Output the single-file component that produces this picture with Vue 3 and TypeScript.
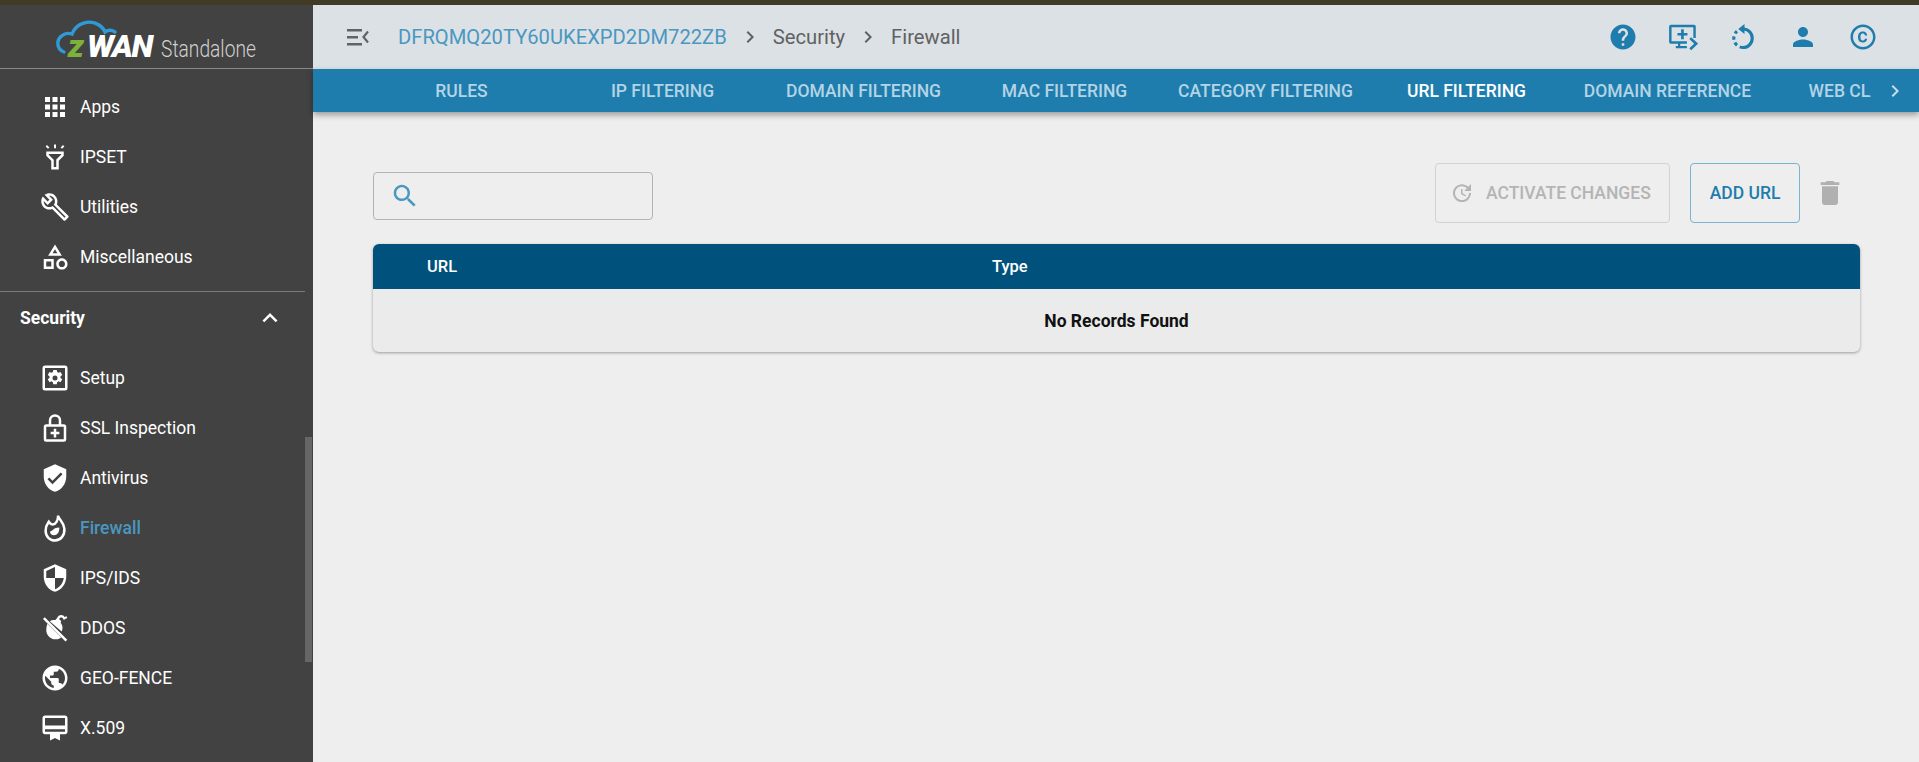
<script setup lang="ts">
interface NavItem { label: string; d: string; line?: string; active?: boolean }

const topItems: NavItem[] = [
  { label: 'Apps', d: 'M4 8h4V4H4v4zm6 12h4v-4h-4v4zm-6 0h4v-4H4v4zm0-6h4v-4H4v4zm6 0h4v-4h-4v4zm6-10v4h4V4h-4zm-6 4h4V4h-4v4zm6 6h4v-4h-4v4zm0 6h4v-4h-4v4z' },
  { label: 'IPSET', d: 'M11.200 2h1.600v3h-1.600zM4.500 3.500l1.100-1.100 1.900 1.900-1.100 1.100zM18.400 2.400l1.100 1.100-1.900 1.900-1.100-1.100zM5 7.500h14v3.400l-4 4V22H9v-7.100l-4-4zm2 2v.6l4 4V20h2v-6l4-4v-.5z' },
  { label: 'Utilities', d: 'M22.610 18.990l-9.080-9.080c.93-2.340.45-5.100-1.440-7C9.790.61 6.210.4 3.660 2.260L7.500 6.110 6.080 7.520 2.250 3.690C.39 6.230.6 9.820 2.900 12.110c1.860 1.860 4.570 2.350 6.890 1.480l9.110 9.110c.39.39 1.020.39 1.410 0l2.300-2.300c.4-.38.4-1.010 0-1.410zm-3 1.600l-9.460-9.460c-.61.45-1.290.72-2 .82-1.360.2-2.790-.21-3.830-1.250C3.370 9.760 2.930 8.500 3 7.260l3.090 3.090 4.240-4.240-3.090-3.090c1.240-.07 2.490.37 3.440 1.310 1.080 1.080 1.490 2.570 1.240 3.960-.12.71-.42 1.370-.88 1.960l9.450 9.450-.88.88z' },
  { label: 'Miscellaneous', d: 'M12 2l-5.500 9h11L12 2zm0 3.840L13.930 9h-3.870L12 5.840zM17.500 13c-2.490 0-4.500 2.010-4.500 4.500s2.010 4.500 4.500 4.500 4.500-2.010 4.500-4.500-2.010-4.500-4.500-4.500zm0 7c-1.380 0-2.500-1.120-2.500-2.500s1.120-2.500 2.500-2.500 2.500 1.120 2.500 2.500-1.120 2.500-2.500 2.500zM3 21.500h8v-8H3v8zm2-6h4v4H5v-4z' },
]

const secItems: NavItem[] = [
  { label: 'Setup', d: 'M4 2h16a2 2 0 0 1 2 2v16a2 2 0 0 1-2 2H4a2 2 0 0 1-2-2V4a2 2 0 0 1 2-2zm0 2v16h16V4zM13.400 5.500l.3 1.700 1.100.6 1.600-.7 1.400 2.400-1.400 1.100c.1.400.1.800 0 1.300l1.400 1-1.400 2.400-1.600-.7-1.100.7-.3 1.700h-2.800l-.3-1.700-1.100-.7-1.600.7-1.400-2.400 1.400-1a3 3 0 0 1 0-1.300l-1.400-1.100 1.400-2.400 1.600.7 1.100-.6.3-1.700zM12 10a2 2 0 1 0 0 4 2 2 0 0 0 0-4z' },
  { label: 'SSL Inspection', d: 'M12 1a5 5 0 0 1 5 5v3h2a2 2 0 0 1 2 2v10a2 2 0 0 1-2 2H5a2 2 0 0 1-2-2V11a2 2 0 0 1 2-2h2V6a5 5 0 0 1 5-5zm0 2a3 3 0 0 0-3 3v3h6V6a3 3 0 0 0-3-3zM5 11v10h14V11zm6 1.500h2V15h2.500v2H13v2.500h-2V17H8.500v-2H11z' },
  { label: 'Antivirus', d: 'M12 1L3 5v6c0 5.550 3.840 10.740 9 12 5.160-1.260 9-6.450 9-12V5l-9-4zm-2 16l-4-4 1.410-1.410L10 14.170l6.590-6.590L18 9l-8 8z' },
  {
    label: 'Firewall',
    active: true,
    d: 'M15.500 11.500c0 4-1.700 6.200-4.300 6.200-2 0-3.200-1.400-3.200-3 2.300-.1 2.300-3.200 7.500-3.200z',
    line: 'M14.500 2c.3 3.200 4.500 5.200 5 10.500.5 5.500-3.200 9.500-7.500 9.500-4.200 0-7.500-3.200-7.500-7.800 0-3 1.400-5.700 2.500-7.200 1 1.500 2 2.200 3.200 2.200 2.300 0 4.300-3.200 4.300-7.200z',
  },
  { label: 'IPS/IDS', d: 'M12 1L3 5v6c0 5.550 3.840 10.740 9 12 5.160-1.260 9-6.450 9-12V5l-9-4zm0 10.990h7c-.53 4.120-3.280 7.790-7 8.940V12H5V6.300l7-3.110v8.800z' },
  { label: 'DDOS', d: 'M2.400 4.800l1.400-1.400 18 18-1.400 1.400zM7.800 6.500c1-.6 2-.9 3.200-.9l1.300-.1 1.400-1.600c.6-1.400 1.800-2.300 3.300-2.300 1.200 0 2.100.6 2.600 1.500l1.700-.5.500 1.400-2 .9c-.4.9-1 .7-1.200-.1-.2-.8-.7-1.300-1.600-1.300-.7 0-1.400.5-1.700 1.400l1.700 1.400-.5 1.400c1 1.200 1.500 2.600 1.500 4.100 0 1.100-.3 2.100-.7 3zM5.900 8.500l11 11c-1.300 1-2.700 1.500-4.400 1.500-4 0-7.500-3.300-7.500-7.300 0-1.900.3-3.700.9-5.200z' },
  { label: 'GEO-FENCE', d: 'M12 2C6.480 2 2 6.480 2 12s4.480 10 10 10 10-4.480 10-10S17.520 2 12 2zm-1 17.930c-3.950-.49-7-3.850-7-7.930 0-.62.08-1.210.21-1.790L9 15v1c0 1.100.9 2 2 2v1.930zm6.900-2.540c-.26-.81-1-1.390-1.900-1.390h-1v-3c0-.55-.45-1-1-1H8v-2h2c.55 0 1-.45 1-1V7h2c1.100 0 2-.9 2-2v-.41c2.930 1.190 5 4.060 5 7.410 0 2.080-.8 3.970-2.100 5.390z' },
  { label: 'X.509', d: 'M20 2H4c-1.110 0-2 .89-2 2v11c0 1.110.89 2 2 2h4v5l4-2 4 2v-5h4c1.110 0 2-.89 2-2V4c0-1.110-.89-2-2-2zm0 13H4v-2h16v2zm0-5H4V4h16v6z' },
]

const tabs: string[] = ['RULES', 'IP FILTERING', 'DOMAIN FILTERING', 'MAC FILTERING', 'CATEGORY FILTERING', 'URL FILTERING', 'DOMAIN REFERENCE', 'WEB CLASSIFY']
</script>

<template>
  <div class="page">
    <div class="strip"></div>
    <div class="shell">
      <aside class="side">
        <div class="logo">
          <svg class="cloud" viewBox="0 0 90 40" width="90" height="40">
            <path d="M9 34 C1 31 1 21 8 17 C11 15 14 15 17 16 C21 5 35 1 44 7 C47 9 49 11 50 14 C53 12 57 12 60 14" fill="none" stroke="#2f9bd6" stroke-width="3.400" stroke-linecap="round" />
          </svg>
          <span class="logo-z">z</span><span class="logo-wan">WAN</span><span class="logo-std">Standalone</span>
        </div>
        <nav class="group">
          <a v-for="it in topItems" :key="it.label" class="item">
            <svg class="ico" viewBox="0 0 24 24"><path :d="it.d" /></svg>
            <span>{{ it.label }}</span>
          </a>
        </nav>
        <div class="sec-head">
          <span>Security</span>
          <svg viewBox="0 0 24 24" width="30" height="30"><path d="M7.410 15.410L12 10.830l4.590 4.580L18 14l-6-6-6 6z" fill="#fff" /></svg>
        </div>
        <nav class="group sec">
          <a v-for="it in secItems" :key="it.label" class="item" :class="{ on: it.active }">
            <svg class="ico" viewBox="0 0 24 24">
              <path :d="it.d" />
              <path v-if="it.line" :d="it.line" fill="none" stroke="#fff" stroke-width="2" />
            </svg>
            <span>{{ it.label }}</span>
          </a>
        </nav>
        <div class="thumb"></div>
      </aside>

      <main class="main">
        <header class="bar">
          <svg class="menu" viewBox="0 0 22 22" width="22" height="22">
            <path d="M0 3h15v2.400H0zM0 10h11v2.400H0zM0 17h15v2.400H0z" fill="#5f6468" />
            <path d="M21 5.500L16.500 11l4.500 5.500" fill="none" stroke="#5f6468" stroke-width="2.200" />
          </svg>
          <span class="crumb-id">DFRQMQ20TY60UKEXPD2DM722ZB</span>
          <svg class="chev" viewBox="0 0 24 24"><path d="M10 6L8.590 7.410 13.170 12l-4.580 4.590L10 18l6-6z" /></svg>
          <span class="crumb">Security</span>
          <svg class="chev" viewBox="0 0 24 24"><path d="M10 6L8.590 7.410 13.170 12l-4.580 4.590L10 18l6-6z" /></svg>
          <span class="crumb">Firewall</span>
          <div class="actions">
            <svg class="act" viewBox="0 0 24 24"><path d="M12 2C6.480 2 2 6.480 2 12s4.480 10 10 10 10-4.480 10-10S17.520 2 12 2zm1 17h-2v-2h2v2zm2.070-7.750l-.9.920C13.450 12.900 13 13.500 13 15h-2v-.5c0-1.100.45-2.100 1.170-2.830l1.240-1.260c.37-.36.59-.86.59-1.410 0-1.100-.9-2-2-2s-2 .9-2 2H8c0-2.210 1.790-4 4-4s4 1.790 4 4c0 .88-.36 1.680-.93 2.250z" /></svg>
            <svg class="act" viewBox="0 0 27 24"><path d="M2.500 1h21A1.500 1.500 0 0 1 25 2.500V13h-2.200V3.200H3.200v12.600H17V18h-6v2h6v2.200H7V20h2v-2H2.500A1.500 1.500 0 0 1 1 16.500v-14A1.500 1.500 0 0 1 2.500 1zM11.800 5h2.400v3.300h3.300v2.400h-3.300V14h-2.400v-3.300H8.500V8.300h3.300z" /><path d="M20 13l5.300 5-5.300 5" fill="none" stroke="#1e7dac" stroke-width="2.400" /></svg>
            <svg class="act" viewBox="0 0 24 24">
              <path d="M12 5.600a7.400 7.400 0 0 1 0 14.800" fill="none" stroke="#1e7dac" stroke-width="2.500" />
              <path d="M12 20.400A7.400 7.400 0 0 1 7.200 7.400" fill="none" stroke="#1e7dac" stroke-width="2.500" stroke-dasharray="2.700 2.400" />
              <path d="M13.200 1.600L8.200 5.600l5 4z" />
            </svg>
            <svg class="act" viewBox="0 0 24 24"><path d="M12 12c2.210 0 4-1.790 4-4s-1.790-4-4-4-4 1.790-4 4 1.790 4 4 4zm0 2c-2.670 0-8 1.340-8 4v2h16v-2c0-2.660-5.330-4-8-4z" /></svg>
            <svg class="act" viewBox="0 0 24 24"><path d="M10.080 10.860c.05-.33.16-.62.3-.87s.34-.46.59-.62c.24-.15.54-.22.91-.23.23.01.44.05.63.13.2.09.38.21.52.36s.25.33.34.53.13.42.14.64h1.790c-.02-.47-.11-.9-.28-1.290s-.4-.73-.7-1.010-.66-.5-1.080-.66-.88-.23-1.390-.23c-.65 0-1.220.11-1.700.34s-.88.53-1.200.92-.56.84-.71 1.360S8 11.290 8 11.870v.27c0 .58.08 1.120.23 1.640s.39.97.71 1.350.72.69 1.200.91c.48.22 1.050.34 1.700.34.47 0 .91-.08 1.320-.23s.77-.36 1.080-.63.56-.58.74-.94.29-.74.3-1.150h-1.790c-.01.21-.06.4-.15.58s-.21.33-.36.46-.32.23-.52.3c-.19.07-.39.09-.6.1-.36-.01-.66-.08-.89-.23-.25-.16-.45-.37-.59-.62s-.25-.55-.3-.88-.08-.67-.08-1v-.27c0-.35.03-.68.08-1.010zM12 2C6.480 2 2 6.480 2 12s4.480 10 10 10 10-4.480 10-10S17.520 2 12 2zm0 18c-4.410 0-8-3.590-8-8s3.590-8 8-8 8 3.590 8 8-3.590 8-8 8z" /></svg>
          </div>
        </header>

        <div class="tabbar">
          <div class="tabs">
            <span v-for="t in tabs" :key="t" class="tab" :class="{ cur: t === 'URL FILTERING' }">{{ t }}</span>
          </div>
          <svg class="tab-next" viewBox="0 0 24 24"><path d="M10 6L8.590 7.410 13.170 12l-4.580 4.590L10 18l6-6z" /></svg>
        </div>

        <section class="content">
          <div class="toolbar">
            <div class="search">
              <svg viewBox="0 0 24 24" width="30" height="30"><path d="M15.500 14h-.79l-.28-.27C15.410 12.590 16 11.110 16 9.500 16 5.910 13.090 3 9.500 3S3 5.910 3 9.500 5.910 16 9.500 16c1.610 0 3.090-.59 4.230-1.570l.27.28v.79l5 4.990L20.490 19l-4.990-5zm-6 0C7.010 14 5 11.990 5 9.500S7.010 5 9.500 5 14 7.010 14 9.500 11.990 14 9.500 14z" fill="#4a97bf" /></svg>
            </div>
            <button class="btn ghost">
              <svg viewBox="0 0 24 24" width="24" height="24"><path d="M21 10.120h-6.780l2.740-2.820c-2.730-2.700-7.150-2.800-9.880-.1-2.730 2.710-2.730 7.080 0 9.790s7.150 2.710 9.880 0C18.320 15.650 19 14.080 19 12.100h2c0 1.980-.88 4.550-2.640 6.290-3.510 3.480-9.210 3.480-12.720 0-3.500-3.470-3.530-9.110-.02-12.580s9.140-3.470 12.650 0L21 3v7.120zM12.500 8v4.250l3.500 2.080-.72 1.210L11 13V8h1.500z" fill="#b4b4b4" /></svg>
              ACTIVATE CHANGES
            </button>
            <button class="btn add">ADD URL</button>
            <svg class="trash" viewBox="0 0 24 24" width="32" height="32"><path d="M6 19c0 1.100.9 2 2 2h8c1.100 0 2-.9 2-2V7H6v12zM19 4h-3.500l-1-1h-5l-1 1H5v2h14V4z" fill="#b0b0b0" /></svg>
          </div>

          <div class="table">
            <div class="thead">
              <span class="col-url">URL</span>
              <span>Type</span>
            </div>
            <div class="tbody">No Records Found</div>
          </div>
        </section>
      </main>
    </div>
  </div>
</template>

<style>
html, body { margin: 0; padding: 0; overflow: hidden; }
</style>

<style scoped>
.page {
  width: 1919px;
  height: 762px;
  display: flex;
  flex-direction: column;
  overflow: hidden;
  font-family: Roboto, "Liberation Sans", sans-serif;
  background: #eeeeee;
}
.strip { height: 5px; background: #413a24; flex: none; }
.shell { flex: 1; display: flex; min-height: 0; }

.side {
  position: relative;
  width: 313px;
  flex: none;
  background: #424242;
  color: #fff;
  overflow: hidden;
}
.logo {
  position: relative;
  height: 64px;
  box-sizing: border-box;
  margin-bottom: 13px;
  border-bottom: 1px solid #8a8a8a;
  display: flex;
  align-items: baseline;
  padding: 25px 0 0 68px;
}
.cloud { position: absolute; left: 55px; top: 13px; }
.logo-z { font-size: 32px; line-height: 32px; font-weight: 900; font-style: italic; color: #7cb23a; }
.logo-wan { font-size: 32px; line-height: 32px; font-weight: 900; font-style: italic; color: #fff; letter-spacing: -1.500px; margin-left: 3px; }
.logo-std { font-size: 24px; line-height: 32px; font-weight: 300; color: #d0d0d0; margin-left: 9px; display: inline-block; transform: scaleX(.8); transform-origin: left; }

.group { display: flex; flex-direction: column; }
.item {
  height: 50px;
  display: flex;
  align-items: center;
  padding-left: 40px;
  gap: 10px;
  font-size: 17.500px;
  color: #fff;
}
.ico { width: 30px; height: 30px; fill: #fff; flex: none; }
.item.on { color: #4a97bf; font-weight: 500; }

.sec-head {
  margin: 9px 8px 0 0;
  border-top: 1px solid #7a7a7a;
  height: 51px;
  display: flex;
  align-items: center;
  justify-content: space-between;
  padding: 0 20px 0 20px;
  font-size: 17.500px;
  font-weight: 700;
}
.sec { margin-top: 10px; }
.thumb {
  position: absolute;
  right: 1px;
  top: 432px;
  width: 7px;
  height: 225px;
  background: #666;
}

.main { flex: 1; min-width: 0; display: flex; flex-direction: column; }
.bar {
  height: 64px;
  flex: none;
  background: #dce1e6;
  display: flex;
  align-items: center;
  padding-left: 34px;
  box-sizing: border-box;
}
.menu { margin-right: 29px; }
.crumb-id { font-size: 20.200px; font-weight: 400; color: #4a97bf; }
.crumb { font-size: 20.200px; color: #616161; }
.chev { width: 24px; height: 24px; fill: #616161; margin: 0 11px; }
.actions { margin-left: auto; display: flex; align-items: center; gap: 30px; padding-right: 41px; }
.act { width: 30px; height: 30px; fill: #1e7dac; }

.tabbar {
  height: 43px;
  flex: none;
  background: #1e7dac;
  display: flex;
  align-items: center;
  padding-left: 48px;
  box-shadow: 0 3px 6px rgba(0,0,0,.35);
  position: relative;
  z-index: 1;
}
.tabs { flex: 1; min-width: 0; display: flex; overflow: hidden; }
.tab {
  flex: 0 0 201px;
  text-align: center;
  font-size: 17.500px;
  font-weight: 500;
  color: #b3d4e6;
  white-space: nowrap;
}
.tab.cur { color: #fff; }
.tab-next { flex: none; width: 48px; height: 24px; fill: #c7dfec; }

.content { flex: 1; padding: 51px 59px 0 60px; }
.toolbar { display: flex; align-items: center; height: 60px; }
.search {
  width: 280px;
  height: 48px;
  box-sizing: border-box;
  border: 1px solid #b3b3b3;
  border-radius: 4px;
  margin-right: auto;
  margin-top: 6px;
  display: flex;
  align-items: center;
  padding-left: 16px;
}
.btn {
  height: 60px;
  box-sizing: border-box;
  border-radius: 4px;
  background: transparent;
  font-family: inherit;
  font-size: 17.500px;
  font-weight: 500;
  display: flex;
  align-items: center;
  white-space: nowrap;
}
.ghost {
  width: 235px;
  border: 1px solid #d2d2d2;
  color: #b4b4b4;
  gap: 12px;
  padding: 0 0 0 14px;
}
.add {
  width: 110px;
  margin-left: 20px;
  border: 1px solid #78b3d2;
  color: #1e7dac;
  justify-content: center;
  padding: 0;
}
.trash { margin: 0 14px; }

.table {
  margin-top: 21px;
  border-radius: 6px;
  overflow: hidden;
  box-shadow: 0 1px 3px rgba(0,0,0,.35);
  background: #ebebeb;
}
.thead {
  height: 45px;
  background: #00527c;
  color: #fff;
  display: flex;
  align-items: center;
  font-size: 16.500px;
  font-weight: 500;
}
.col-url { margin-left: 54px; width: 565px; }
.tbody {
  height: 63px;
  display: flex;
  align-items: center;
  justify-content: center;
  font-size: 17.500px;
  font-weight: 700;
  color: #111;
}
</style>
